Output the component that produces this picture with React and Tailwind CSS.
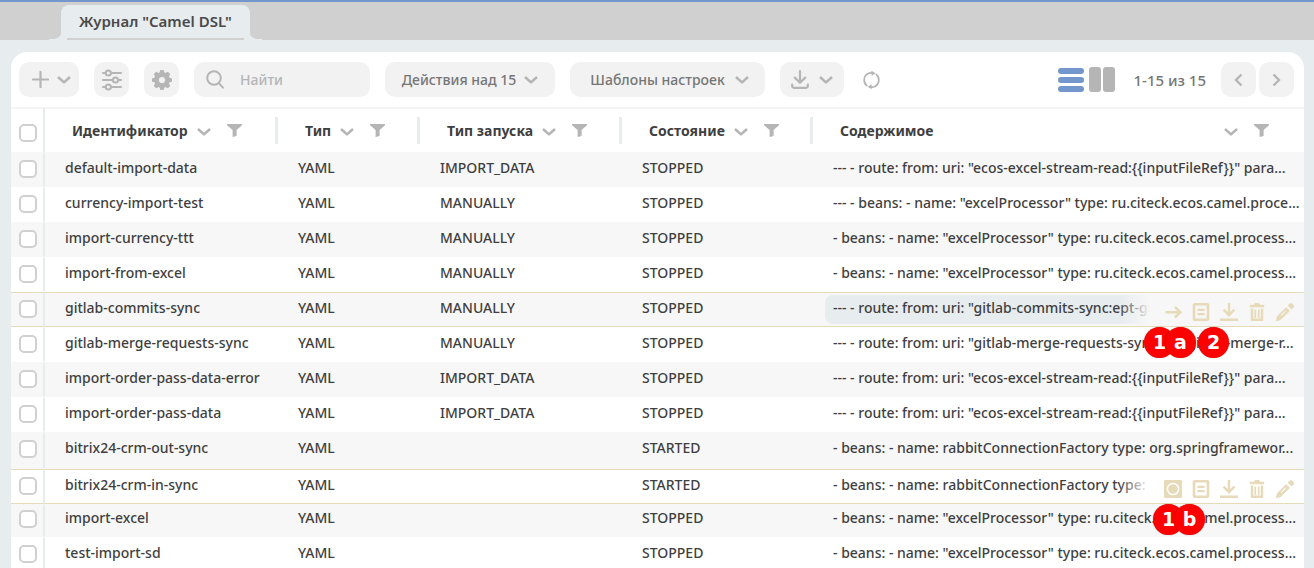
import React from "react";

const rows = [
  { id: "default-import-data", launch: "IMPORT_DATA", state: "STOPPED", content: '--- - route: from: uri: "ecos-excel-stream-read:{{inputFileRef}}" para...' },
  { id: "currency-import-test", launch: "MANUALLY", state: "STOPPED", content: '--- - beans: - name: "excelProcessor" type: ru.citeck.ecos.camel.proce...' },
  { id: "import-currency-ttt", launch: "MANUALLY", state: "STOPPED", content: '- beans: - name: "excelProcessor" type: ru.citeck.ecos.camel.process...' },
  { id: "import-from-excel", launch: "MANUALLY", state: "STOPPED", content: '- beans: - name: "excelProcessor" type: ru.citeck.ecos.camel.process...' },
  { id: "gitlab-commits-sync", launch: "MANUALLY", state: "STOPPED", content: '--- - route: from: uri: "gitlab-commits-sync:ept-gi', active: true, chip: true, first: "arrow" },
  { id: "gitlab-merge-requests-sync", launch: "MANUALLY", state: "STOPPED", content: '--- - route: from: uri: "gitlab-merge-requests-sync:ept-gitlab-merge-r...' },
  { id: "import-order-pass-data-error", launch: "IMPORT_DATA", state: "STOPPED", content: '--- - route: from: uri: "ecos-excel-stream-read:{{inputFileRef}}" para...' },
  { id: "import-order-pass-data", launch: "IMPORT_DATA", state: "STOPPED", content: '--- - route: from: uri: "ecos-excel-stream-read:{{inputFileRef}}" para...' },
  { id: "bitrix24-crm-out-sync", launch: "", state: "STARTED", content: "- beans: - name: rabbitConnectionFactory type: org.springframewor...", size: "h-[37px]" },
  { id: "bitrix24-crm-in-sync", launch: "", state: "STARTED", content: "- beans: - name: rabbitConnectionFactory type:", active: true, first: "stop" },
  { id: "import-excel", launch: "", state: "STOPPED", content: '- beans: - name: "excelProcessor" type: ru.citeck.ecos.camel.process...', size: "h-[33px]", tight: true },
  { id: "test-import-sd", launch: "", state: "STOPPED", content: '- beans: - name: "excelProcessor" type: ru.citeck.ecos.camel.process...' },
];

const badges = {
  "gitlab-merge-requests-sync": [
    ["1", "right-[129px]"],
    ["a", "right-[108px]"],
    ["2", "right-[75px]"],
  ],
  "import-excel": [
    ["1", "right-[120px]"],
    ["b", "right-[99px]"],
  ],
};

function Chevron() {
  return (
    <svg className="h-2 w-3.5 shrink-0" viewBox="0 0 14 8" fill="none" stroke="#b5b5b5" strokeWidth="2.6">
      <path d="M1 1l6 5.4L13 1" strokeLinejoin="round" />
    </svg>
  );
}

function Funnel() {
  return (
    <svg className="h-[13px] w-[15px]" viewBox="0 0 15 13" fill="#b5b5b5">
      <path d="M0 0h15v1.2L9.6 6v6L5.6 13V6L0 1.2z" />
    </svg>
  );
}

function DownloadTray() {
  return (
    <svg className="h-[19px] w-[18px]" viewBox="0 0 18 19" fill="none" stroke="#b5b5b5" strokeWidth="2.2" strokeLinecap="round" strokeLinejoin="round">
      <path d="M9 1.2v11.3M3.8 7.6L9 12.7l5.2-5.1" />
      <path d="M1.2 14.6v1.6a1.6 1.6 0 0 0 1.6 1.6h12.4a1.6 1.6 0 0 0 1.6-1.6v-1.6" />
    </svg>
  );
}

function Gear() {
  return (
    <svg className="h-5 w-5" viewBox="0 0 20 20">
      <g fill="#b5b5b5">
        <circle cx="10" cy="10" r="8" />
        {[0, 45, 90, 135].map((angle) => (
          <rect key={angle} x="7.9" y="0" width="4.2" height="20" rx="1.2" transform={`rotate(${angle} 10 10)`} />
        ))}
      </g>
      <circle cx="10" cy="10" r="3.1" fill="#f2f2f2" />
    </svg>
  );
}

function Sliders() {
  return (
    <svg className="h-[22px] w-5" viewBox="0 0 20 22" fill="none" stroke="#b5b5b5" strokeWidth="2" strokeLinecap="round">
      <path d="M1 4h2.5M9 4h10M1 11h9.500M16.500 11H19M1 18h2.500M9 18h10" />
      <circle cx="6.300" cy="4" r="2.600" />
      <circle cx="13.500" cy="11" r="2.600" />
      <circle cx="6.300" cy="18" r="2.600" />
    </svg>
  );
}

function ActionIcon({ kind }) {
  const shapes = {
    arrow: <path d="M1.500 9.200h14.500M10.900 3.900l5.500 5.300-5.500 5.300" fill="none" stroke="#e6dab8" strokeWidth="2.600" />,
    stop: (
      <>
        <rect width="18" height="18" rx="1" fill="#e6dab8" />
        <circle cx="9" cy="9" r="5.600" fill="none" stroke="#fff" strokeWidth="1.500" />
      </>
    ),
    view: (
      <g fill="none" stroke="#e6dab8">
        <rect x="2" y="1.300" width="14" height="15.400" rx="0.800" strokeWidth="2.600" />
        <path d="M5.400 6.800h7.200M5.400 11.200h7.200" strokeWidth="2.300" />
      </g>
    ),
    download: <path d="M9 0v12M3.600 6.700L9 12.200l5.400-5.500M0 16.800h18" fill="none" stroke="#e6dab8" strokeWidth="2.400" />,
    remove: (
      <>
        <path d="M1.800 1.800h4L7 0h4l1.200 1.800h4v2.500H1.800z" fill="#e6dab8" />
        <path d="M4 5.600v11.200h10V5.600" fill="none" stroke="#e6dab8" strokeWidth="2.400" />
        <path d="M7.300 6.500v8.500M10.700 6.500v8.500" stroke="#e6dab8" strokeWidth="1.700" />
      </>
    ),
    edit: (
      <g fill="#e6dab8">
        <path d="M11.700 2.600l2-2a1.500 1.500 0 0 1 2.200 0l1.700 1.700a1.500 1.500 0 0 1 0 2.200l-2 2z" />
        <path d="M10.500 3.900l3.700 3.700-2.800 2.800-3.700-3.700z" opacity="0.550" />
        <path fillRule="evenodd" d="M9.800 4.600l3.700 3.700-8.300 8.300a1 1 0 0 1-.5.300L1 18a.8.8 0 0 1-1-1l1.100-3.700 1-1zM9.900 7.100l-5.200 5.200.7.700 5.200-5.200z" />
      </g>
    ),
  };
  return (
    <svg className="h-[18px] w-[18px]" viewBox="0 0 18 18">
      {shapes[kind]}
    </svg>
  );
}

const actionLabels = { arrow: "Запустить", stop: "Остановить", view: "Просмотр", download: "Скачать", remove: "Удалить", edit: "Редактировать" };

function RowActions({ first, fade }) {
  return (
    <div className={`absolute inset-y-0 right-0 flex items-start gap-2.5 bg-linear-to-r from-transparent to-[32px] pt-2.5 pr-2.5 pl-[46px] ${fade}`}>
      {[first, "view", "download", "remove", "edit"].map((kind) => (
        <button key={kind} type="button" aria-label={actionLabels[kind]}>
          <ActionIcon kind={kind} />
        </button>
      ))}
    </div>
  );
}

function HeaderCell({ title, last }) {
  return (
    <th scope="col" className="border-t-2 border-[#f5f5f5] p-0">
      <div className="flex h-[43px] items-center">
        <div className={`flex flex-1 items-center pl-[27px] ${last ? "pr-[35px]" : ""}`}>
          <span className={`font-bold text-[#3f3f3f] ${last ? "flex-1 text-left" : ""}`}>{title}</span>
          <button type="button" aria-label={`Сортировать: ${title}`} className="ml-[9px] pt-0.5">
            <Chevron />
          </button>
          <button type="button" aria-label={`Фильтр: ${title}`} className="ml-4">
            <Funnel />
          </button>
        </div>
        {!last && <div className="h-[27px] w-[3px] bg-[#e7ecef]" />}
      </div>
    </th>
  );
}

function Check({ label }) {
  return (
    <input
      type="checkbox"
      aria-label={label}
      className="block h-[18px] w-[18px] appearance-none rounded-[5px] border-2 border-[#d0d0d0] bg-white checked:bg-[#7396cd]"
    />
  );
}

const tool = "flex h-[35px] items-center justify-center rounded-[10px] bg-[#f2f2f2]";

function Toolbar() {
  return (
    <div className="flex items-center gap-[15px] pt-2.5 pr-2.5 pb-2.5 pl-2">
      <button type="button" aria-label="Создать" className={`${tool} w-[60px] gap-2 pl-1`}>
        <svg className="h-[17px] w-[17px]" viewBox="0 0 17 17" stroke="#b5b5b5" strokeWidth="2.200" strokeLinecap="round">
          <path d="M8.500 1v15M1 8.500h15" />
        </svg>
        <Chevron />
      </button>
      <button type="button" aria-label="Фильтры" className={`${tool} w-[35px]`}>
        <Sliders />
      </button>
      <button type="button" aria-label="Настройки" className={`${tool} w-[35px]`}>
        <Gear />
      </button>
      <label className={`${tool} w-44 pl-3`}>
        <svg className="h-[19px] w-[18px] shrink-0" viewBox="0 0 18 19" fill="none" stroke="#b5b5b5" strokeWidth="2" strokeLinecap="round">
          <circle cx="8" cy="8" r="6.800" />
          <path d="M12.900 13.200l4 4.500" />
        </svg>
        <input type="text" aria-label="Найти" placeholder="Найти" className="ml-4 w-full min-w-0 bg-transparent outline-none placeholder:text-[#b5b5b5]" />
      </label>
      <button type="button" className={`${tool} w-[170px] gap-2`}>
        Действия над 15
        <Chevron />
      </button>
      <button type="button" className={`${tool} w-[195px] gap-2.5 pl-1`}>
        Шаблоны настроек
        <Chevron />
      </button>
      <button type="button" aria-label="Экспорт" className={`${tool} w-16 gap-2.5`}>
        <DownloadTray />
        <Chevron />
      </button>
      <button type="button" aria-label="Обновить" className="ml-1">
        <svg className="h-[18px] w-[17px]" viewBox="0 0 17 18" fill="none" stroke="#b5b5b5" strokeWidth="1.700" strokeLinecap="round">
          <path d="M3.800 14.600A7.300 7.300 0 0 1 4.600 2.800Q7 1.500 10.500 2M13.200 3.400a7.300 7.300 0 0 1-.8 11.800Q10 16.500 6.800 16" />
          <path d="M8.800.3l3.200 2-2.900 2zM8.200 13.800l-3 2 3 1.900z" fill="#b5b5b5" strokeWidth="0.500" />
        </svg>
      </button>
      <div className="ml-auto flex items-center">
        <button type="button" aria-label="Список" className="mr-[5px] flex w-[26px] flex-col gap-[3px]">
          <span className="h-1.5 w-full rounded-[3px] bg-[#7396cd]" />
          <span className="h-1.5 w-full rounded-[3px] bg-[#7396cd]" />
          <span className="h-1.5 w-full rounded-[3px] bg-[#7396cd]" />
        </button>
        <button type="button" aria-label="Колонки" className="flex gap-0.5">
          <span className="h-[25px] w-3 rounded-[3px] bg-[#b5b5b5]" />
          <span className="h-[25px] w-3 rounded-[3px] bg-[#b5b5b5]" />
        </button>
        <span className="mr-[15px] ml-[18px] text-[15px]">1-15 из 15</span>
        {["M7.500 1.500L2 7l5.500 5.500", "M1.500 1.500L7 7l-5.500 5.500"].map((d, i) => (
          <button key={d} type="button" aria-label={i ? "Следующая страница" : "Предыдущая страница"} className={`${tool} w-[35px] ${i ? "ml-[3px]" : ""}`}>
            <svg className="h-3.5 w-[9px]" viewBox="0 0 9 14" fill="none" stroke="#b5b5b5" strokeWidth="2.400">
              <path d={d} />
            </svg>
          </button>
        ))}
      </div>
    </div>
  );
}

function Row({ row, index }) {
  const shaded = index % 2 === 0;
  const line = row.active ? "border-[#e6dab8]" : "border-transparent";
  const text = `border-y pl-5 pr-2 pb-0 align-top truncate ${line} ${row.tight ? "pt-[3px]" : "pt-[5px]"}`;
  const marks = badges[row.id];
  return (
    <tr className={`${row.size || "h-[35px]"} ${shaded ? "bg-[#f7f7f7]" : "bg-white"}`}>
      <td className={`border-y border-r-2 border-r-[#e7ecef] pb-0 pl-2 align-top ${row.active ? "border-y-[#e6dab8]" : "border-y-transparent"} ${row.tight ? "pt-[5px]" : "pt-[7px]"}`}>
        <Check label={row.id} />
      </td>
      <td className={text}>{row.id}</td>
      <td className={text}>YAML</td>
      <td className={text}>{row.launch}</td>
      <td className={text}>{row.state}</td>
      <td className={`relative border-y p-0 pl-3 align-top ${line}`}>
        <div className={`mr-1 truncate rounded-lg pl-2 ${row.tight ? "pt-[3px]" : "mt-0.5 h-[29px] pt-[3px]"} ${row.chip ? "bg-[#e7ecef]" : ""}`}>
          {row.content}
        </div>
        {row.active && <RowActions first={row.first} fade={shaded ? "to-[#f7f7f7]" : "to-white"} />}
        {marks &&
          marks.map(([mark, place]) => (
            <span
              key={mark}
              className={`absolute -top-px flex h-[31px] w-[31px] items-center justify-center rounded-full bg-[#ff0000] pb-0.5 font-['DejaVu_Sans',sans-serif] text-[19px] font-bold text-white shadow-[0_0_1px_#00000080] ${place}`}
            >
              {mark}
            </span>
          ))}
      </td>
    </tr>
  );
}

export default function App() {
  return (
    <div className="flex h-screen flex-col overflow-hidden bg-[#e7ecef] font-['Noto_Sans',sans-serif] text-sm leading-5 font-medium text-[#767676]">
      <header className="border-t-2 border-[#7396cd] bg-[#d0d0d0] pt-[3px] pl-[61px]">
        <a href="#journal" className="relative inline-flex h-[35px] flex-col rounded-t-[8px] bg-[#e7ecef] px-1.5 align-top text-[15px] font-semibold text-[#4a4a4a]">
          <svg className="absolute bottom-0 -left-3 h-1.5 w-3" viewBox="0 0 12 6" fill="#e7ecef">
            <path d="M0 5h5Q11 4 12 0v6H0z" />
          </svg>
          <svg className="absolute -right-3 bottom-0 h-1.5 w-3" viewBox="0 0 12 6" fill="#e7ecef">
            <path d="M12 5H7Q1 4 0 0v6h12z" />
          </svg>
          <span className="flex-1 px-3 pt-1.5">Журнал "Camel DSL"</span>
          <span className="h-0.5 bg-[#d0d0d0]" />
        </a>
      </header>
      <main className="mt-3 mr-2.5 ml-[11px] min-h-0 flex-1 overflow-hidden rounded-t-[16px] bg-white">
        <Toolbar />
        <table className="w-full table-fixed border-separate border-spacing-0 text-[#3f3f3f]">
          <colgroup>
            <col className="w-[34px]" />
            <col className="w-[233px]" />
            <col className="w-[142px]" />
            <col className="w-[202px]" />
            <col className="w-[191px]" />
            <col />
          </colgroup>
          <thead>
            <tr>
              <th className="border-t-2 border-r-2 border-t-[#f5f5f5] border-r-[#e7ecef] p-0 pt-[15px] pl-2 align-top">
                <Check label="Выбрать все" />
              </th>
              <HeaderCell title="Идентификатор" />
              <HeaderCell title="Тип" />
              <HeaderCell title="Тип запуска" />
              <HeaderCell title="Состояние" />
              <HeaderCell title="Содержимое" last />
            </tr>
          </thead>
          <tbody>
            {rows.map((row, index) => (
              <Row key={row.id} row={row} index={index} />
            ))}
          </tbody>
        </table>
      </main>
    </div>
  );
}
